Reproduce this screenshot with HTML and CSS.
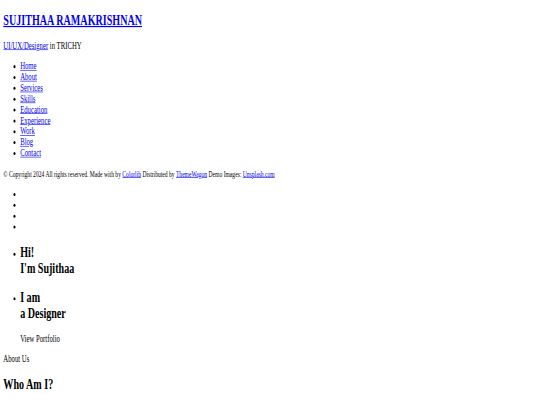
FILE: index.html
```html
<!DOCTYPE html>
<html>
<head>
<meta charset="utf-8">
<title>Sujithaa Ramakrishnan</title>
<link rel="stylesheet" href="styles.css">
</head>
<body>
<div class="viewport">
<div class="page">
  <h1 class="brand"><a href="#">SUJITHAA RAMAKRISHNAN</a></h1>
  <p><a href="#">UI/UX/Designer</a> in TRICHY</p>
  <ul>
    <li><a href="#">Home</a></li>
    <li><a href="#">About</a></li>
    <li><a href="#">Services</a></li>
    <li><a href="#">Skills</a></li>
    <li><a href="#">Education</a></li>
    <li><a href="#">Experience</a></li>
    <li><a href="#">Work</a></li>
    <li><a href="#">Blog</a></li>
    <li><a href="#">Contact</a></li>
  </ul>
  <p><small>© Copyright 2024 All rights reserved. Made with by <a href="#">Colorlib</a> Distributed by <a href="#">ThemeWagon</a> Demo Images: <a href="#">Unsplash.com</a></small></p>
  <ul>
    <li></li>
    <li></li>
    <li></li>
    <li></li>
  </ul>
  <ul>
    <li><h2>Hi!<br>I'm Sujithaa</h2></li>
    <li><h2>I am<br>a Designer</h2><p>View Portfolio</p></li>
  </ul>
  <p>About Us</p>
  <h2>Who Am I?</h2>
</div>
</div>
</body>
</html>
```
FILE: styles.css
```css
html, body {
  margin: 0;
  padding: 0;
}
.viewport {
  width: 540px;
  height: 405px;
  overflow: hidden;
}
.page {
  display: flow-root;
  width: 1280px;
  padding: 0 8px;
  box-sizing: border-box;
  font-family: "Liberation Serif", "Times New Roman", serif;
  font-size: 16px;
  color: #000;
  transform: scale(0.42, 0.603);
  transform-origin: 0 0;
}
.page a {
  color: #0000ee;
}
.brand {
  font-size: 24px;
  margin: 19.92px 0;
}
small {
  font-size: 13.33px;
}
```
